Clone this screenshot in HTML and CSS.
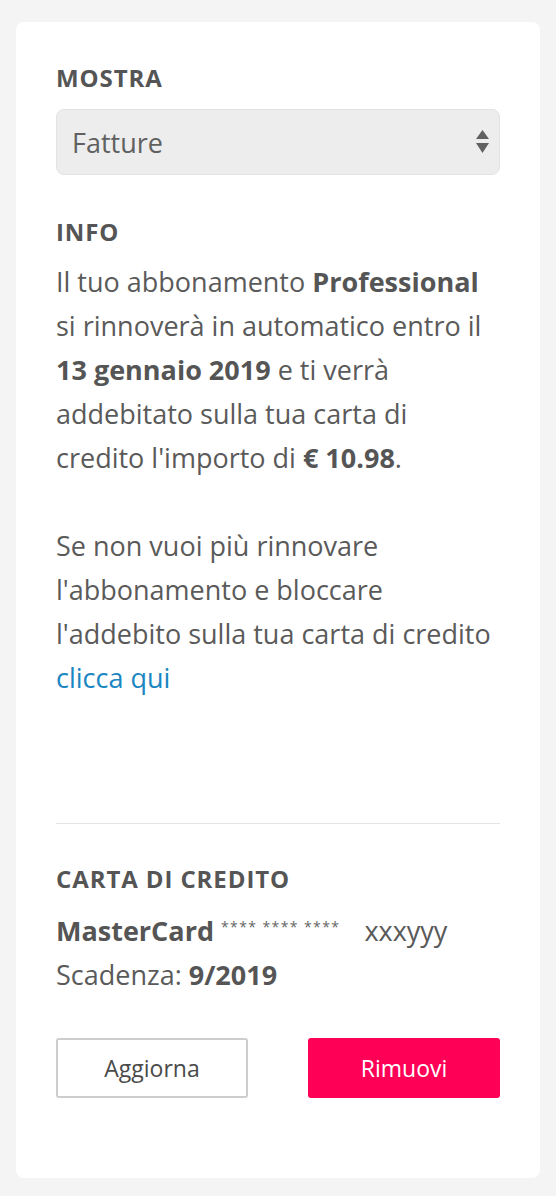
FILE: index.html
```html
<!DOCTYPE html>
<html lang="it">
<head>
<meta charset="utf-8">
<title>Abbonamento</title>
<link rel="stylesheet" href="styles.css">
</head>
<body>
<div class="card">
  <section class="block">
    <h2 class="label">Mostra</h2>
    <div class="select">
      <span class="select-value">Fatture</span>
      <svg class="select-arrows" width="13" height="24" viewBox="0 0 13 24"><path d="M6.5 0 L13 9 L0 9 Z" fill="#606060"/><path d="M0 13 L13 13 L6.5 23 Z" fill="#606060"/></svg>
    </div>
  </section>
  <section class="block info">
    <h2 class="label">Info</h2>
    <p class="text">Il tuo abbonamento <b>Professional</b> si rinnoverà in automatico entro il <b>13 gennaio 2019</b> e ti verrà addebitato sulla tua carta di credito l'importo di <b>€ 10.98</b>.</p>
    <p class="text">Se non vuoi più rinnovare l'abbonamento e bloccare l'addebito sulla tua carta di credito <a class="link" href="#">clicca qui</a></p>
  </section>
  <hr class="divider">
  <section class="block cc">
    <h2 class="label">Carta di credito</h2>
    <div class="cc-lines">
      <div class="cc-line"><b>MasterCard</b> <span class="mask">**** **** ****</span><span class="last">xxxyyy</span></div>
      <div class="cc-line">Scadenza: <b>9/2019</b></div>
    </div>
    <div class="actions">
      <button class="btn btn-outline">Aggiorna</button>
      <button class="btn btn-primary">Rimuovi</button>
    </div>
  </section>
</div>
</body>
</html>
```
FILE: styles.css
```css
html, body {
  margin: 0;
  padding: 0;
  background: #f4f4f4;
}
body {
  padding: 22px 16px 18px;
  font-family: "Open Sans", "Noto Sans", sans-serif;
  color: #5a5a5a;
}
.card {
  background: #fff;
  border-radius: 8px;
  padding: 42px 40px 80px;
}
.label {
  margin: 0;
  font-size: 24px;
  font-weight: 700;
  text-transform: uppercase;
  letter-spacing: 0.9px;
  color: #555;
  line-height: 28px;
}
.select {
  margin-top: 17px;
  height: 66px;
  box-sizing: border-box;
  background: #ededed;
  border: 1px solid #e3e3e3;
  border-radius: 8px;
  display: flex;
  align-items: center;
  justify-content: space-between;
  padding: 0 10px 0 15px;
}
.select-value {
  font-size: 27px;
  color: #606060;
}
.select-arrows {
  display: block;
}
.info {
  margin-top: 43px;
}
.text {
  margin: 14px 0 0;
  font-size: 27px;
  line-height: 44px;
  color: #5a5a5a;
}
.text + .text {
  margin-top: 44px;
}
b {
  font-weight: 700;
  color: #555;
}
.link {
  color: #1a86c2;
  text-decoration: none;
}
.divider {
  border: none;
  border-top: 1px solid #e4e4e4;
  margin: 123px 0 0;
}
.cc {
  margin-top: 41px;
}
.cc-lines {
  margin-top: 12px;
  font-size: 27px;
  line-height: 44px;
}
.mask {
  font-size: 14px;
  vertical-align: 9px;
  color: #666;
  letter-spacing: 1.4px;
}
.last {
  margin-left: 24px;
}
.actions {
  margin-top: 41px;
  display: flex;
  justify-content: space-between;
}
.btn {
  width: 192px;
  height: 60px;
  font-family: inherit;
  font-size: 23px;
  border-radius: 3px;
  cursor: pointer;
}
.btn-outline {
  background: #fff;
  border: 2px solid #cdcdcd;
  color: #4a4a4a;
}
.btn-primary {
  background: #ff0057;
  border: none;
  color: #fff;
}
```
